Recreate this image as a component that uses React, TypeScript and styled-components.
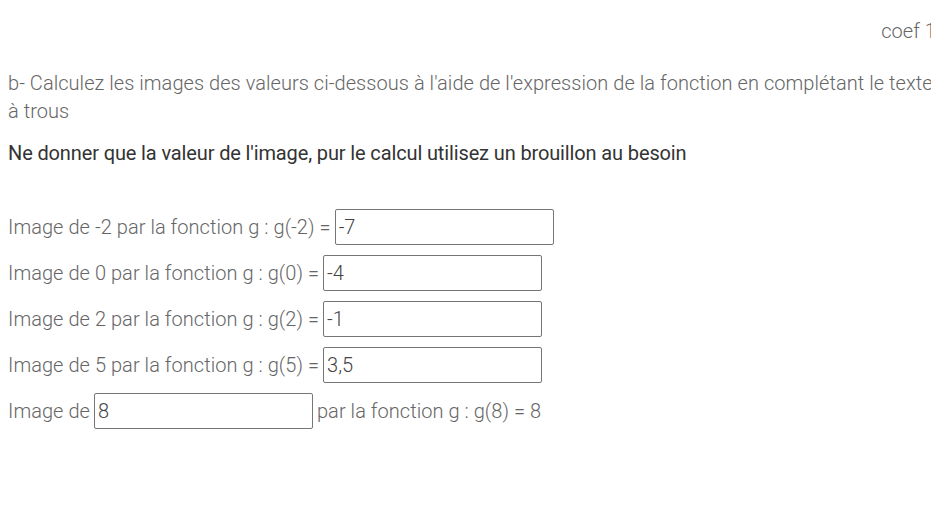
import { createGlobalStyle, styled } from 'styled-components';

const GlobalStyle = createGlobalStyle`
  html, body {
    margin: 0;
    padding: 0;
    background: #fff;
    overflow: hidden;
  }
  body {
    font-family: Roboto, "Liberation Sans", sans-serif;
  }
`;

const rows = [
  { x: '-2', value: '-7' },
  { x: '0', value: '-4' },
  { x: '2', value: '-1' },
  { x: '5', value: '3,5' },
];

export default function App() {
  return (
    <>
      <GlobalStyle />
      <Page>
        <Coef>coef 1</Coef>
        <Question>
          b- Calculez les images des valeurs ci-dessous à l'aide de l'expression de la fonction en complétant le texte
          à trous
        </Question>
        <Hint>Ne donner que la valeur de l'image, pur le calcul utilisez un brouillon au besoin</Hint>
        <Answers>
          {rows.map((row) => (
            <Row key={row.x}>
              Image de {row.x} par la fonction g : g({row.x}) =
              <Field defaultValue={row.value} />
            </Row>
          ))}
          <Row>
            Image de
            <Field defaultValue="8" />
            par la fonction g : g(8) = 8
          </Row>
        </Answers>
      </Page>
    </>
  );
}

const Page = styled.div`
  width: 928px;
  padding: 0 0 0 8px;
  color: #666;
  font-weight: 300;
  font-size: 20px;
  line-height: 28px;
  letter-spacing: 0.05px;
`;

const Coef = styled.div`
  text-align: right;
  padding-top: 17px;
  margin-bottom: 24px;
`;

const Question = styled.p`
  margin: 0 0 14px;
`;

const Hint = styled.p`
  margin: 0 0 42px;
  color: #333;
  font-weight: 400;
  letter-spacing: -0.13px;
`;

const Answers = styled.div`
  display: flex;
  flex-direction: column;
  gap: 10px;
`;

const Row = styled.div`
  display: flex;
  align-items: center;
  gap: 4px;
  white-space: pre;
`;

const Field = styled.input`
  box-sizing: border-box;
  width: 219px;
  height: 36px;
  padding: 0 3px;
  border: 1px solid #767676;
  border-radius: 2px;
  font-family: inherit;
  font-size: 20px;
  font-weight: 300;
  color: #444;
  background: #fff;
`;
